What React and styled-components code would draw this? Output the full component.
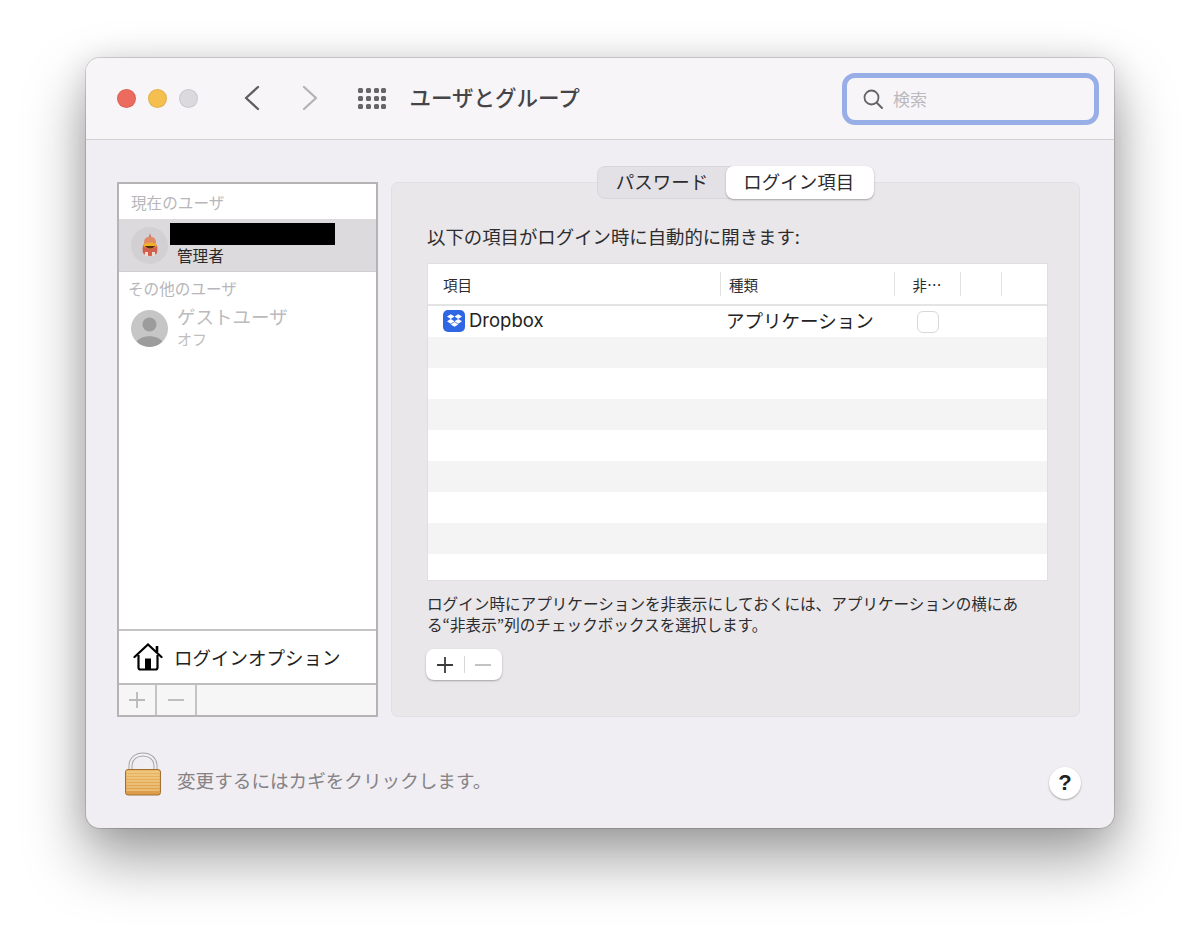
import React from 'react'
import styled, { createGlobalStyle } from 'styled-components'
import { FaDropbox } from 'react-icons/fa'

const JP = `"Noto Sans CJK JP", "Noto Sans", sans-serif`

const Global = createGlobalStyle`
    html, body {
        margin: 0;
        height: 942px;
        overflow: hidden;
        background: #fff;
        font-family: ${JP};
    }
`

const rows = Array.from({ length: 9 })

export default function App() {
    return (
        <Page>
            <Global />
            <Window>
                <TitleBar>
                    <Lights>
                        <Light $c="#ec6a5e" />
                        <Light $c="#f4bf4f" />
                        <Light $c="#dcd9de" />
                    </Lights>
                    <NavIcon viewBox="0 0 20 28" $ml={44}>
                        <path d="M16 3 L4 14 L16 25" stroke="#5f5d60" />
                    </NavIcon>
                    <NavIcon viewBox="0 0 20 28" $ml={38}>
                        <path d="M4 3 L16 14 L4 25" stroke="#b4b2b5" />
                    </NavIcon>
                    <DotGrid>
                        {Array.from({ length: 12 }).map((_, i) => (
                            <i key={i} />
                        ))}
                    </DotGrid>
                    <Title>ユーザとグループ</Title>
                    <SearchBox>
                        <svg width="22" height="22" viewBox="0 0 22 22" fill="none">
                            <circle cx="9.5" cy="9.5" r="7" stroke="#666467" strokeWidth="1.8" />
                            <path d="M14.8 14.8 L20 20" stroke="#666467" strokeWidth="2" strokeLinecap="round" />
                        </svg>
                        <SearchText>検索</SearchText>
                    </SearchBox>
                </TitleBar>

                <Body>
                    <Columns>
                        <Sidebar>
                            <UserList>
                                <GroupLabel $left={12}>現在のユーザ</GroupLabel>
                                <SelectedUser>
                                    <Avatar />
                                    <UserInfo>
                                        <Redacted />
                                        <Role>管理者</Role>
                                    </UserInfo>
                                </SelectedUser>
                                <GroupLabel $left={9} $top={6}>その他のユーザ</GroupLabel>
                                <GuestUser>
                                    <GuestAvatar />
                                    <div>
                                        <GuestName>ゲストユーザ</GuestName>
                                        <GuestState>オフ</GuestState>
                                    </div>
                                </GuestUser>
                            </UserList>
                            <LoginOptions>
                                <HouseIcon />
                                <span>ログインオプション</span>
                            </LoginOptions>
                            <BarRow>
                                <BarButton $w={36}>
                                    <PlusGlyph $c="#b9b9b9" />
                                </BarButton>
                                <BarButton $w={38}>
                                    <MinusGlyph $c="#b9b9b9" />
                                </BarButton>
                            </BarRow>
                        </Sidebar>

                        <Panel>
                            <Tabs>
                                <Tab>パスワード</Tab>
                                <Tab $active>ログイン項目</Tab>
                            </Tabs>
                            <PanelInner>
                                <Heading>以下の項目がログイン時に自動的に開きます:</Heading>
                                <Table>
                                    <HeadRow>
                                        <HeadCell $w={293} $pad={15}>項目</HeadCell>
                                        <HeadCell $w={175} $pad={8} $sep>種類</HeadCell>
                                        <HeadCell $w={66} $pad={17} $sep>非…</HeadCell>
                                        <HeadCell $w={41} $sep />
                                        <HeadCell $w={46} $sep />
                                    </HeadRow>
                                    {rows.map((_, i) => (
                                        <Row key={i} $odd={i % 2 === 1}>
                                            {i === 0 && (
                                                <>
                                                    <NameCell>
                                                        <DropIcon>
                                                            <FaDropbox size={15} color="#fff" />
                                                        </DropIcon>
                                                        <RowText $latin>Dropbox</RowText>
                                                    </NameCell>
                                                    <KindCell>
                                                        <RowText>アプリケーション</RowText>
                                                    </KindCell>
                                                    <Check />
                                                </>
                                            )}
                                        </Row>
                                    ))}
                                </Table>
                                <Note>
                                    ログイン時にアプリケーションを非表示にしておくには、アプリケーションの横にあ
                                    <br />
                                    る“非表示”列のチェックボックスを選択します。
                                </Note>
                                <AddRemove>
                                    <AddPart>
                                        <PlusGlyph $c="#3b3a3c" />
                                    </AddPart>
                                    <AddDivider />
                                    <AddPart>
                                        <MinusGlyph $c="#bdbbbe" />
                                    </AddPart>
                                </AddRemove>
                            </PanelInner>
                        </Panel>
                    </Columns>

                    <Footer>
                        <LockIcon />
                        <LockText>変更するにはカギをクリックします。</LockText>
                        <Help>?</Help>
                    </Footer>
                </Body>
            </Window>
        </Page>
    )
}

function PlusGlyph({ $c }) {
    return (
        <svg width="18" height="18" viewBox="0 0 18 18">
            <path d="M9 1 V17 M1 9 H17" stroke={$c} strokeWidth="1.8" />
        </svg>
    )
}

function MinusGlyph({ $c }) {
    return (
        <svg width="18" height="18" viewBox="0 0 18 18">
            <path d="M1 9 H17" stroke={$c} strokeWidth="1.8" />
        </svg>
    )
}

function Avatar() {
    return (
        <AvatarCircle>
            <svg width="16" height="24" viewBox="0 0 16 24">
                <path d="M8 0 L9 5 L7 5 Z" fill="#c9473a" />
                <path d="M1 20 C0 15 1 12 2 11 L14 11 C15 12 16 15 15 20 C12 24 4 24 1 20 Z" fill="#d2604e" />
                <ellipse cx="8" cy="9" rx="6" ry="5.5" fill="#e08a66" />
                <ellipse cx="8" cy="12.5" rx="6.5" ry="3" fill="#efb02c" />
                <path d="M2.5 13 Q8 18 13.5 13 Z" fill="#5c2b14" />
                <rect x="3" y="19" width="3" height="4" fill="#ecdccf" />
                <rect x="10" y="19" width="3" height="4" fill="#ecdccf" />
            </svg>
        </AvatarCircle>
    )
}

function GuestAvatar() {
    return (
        <GuestCircle>
            <svg width="37" height="37" viewBox="0 0 37 37">
                <circle cx="18.5" cy="14.5" r="7" fill="#9c9c9c" />
                <path d="M5 33 C8 24 29 24 32 33 C26 39 11 39 5 33 Z" fill="#9c9c9c" />
            </svg>
        </GuestCircle>
    )
}

function HouseIcon() {
    return (
        <svg width="30" height="28" viewBox="0 0 30 28" fill="none">
            <path d="M1.5 14 L15 1.5 L28.5 14" stroke="#000" strokeWidth="2.2" strokeLinecap="round" />
            <path d="M24 3 V9" stroke="#000" strokeWidth="2.6" />
            <path d="M5.5 12 V24.5 Q5.5 26.5 7.5 26.5 H22.5 Q24.5 26.5 24.5 24.5 V12" stroke="#000" strokeWidth="2.2" />
            <rect x="12" y="15.5" width="6" height="11" fill="#000" />
        </svg>
    )
}

function LockIcon() {
    const bars = [20, 23, 26, 29, 32, 35, 38]
    return (
        <svg width="36" height="44" viewBox="0 0 36 44" fill="none">
            <defs>
                <linearGradient id="lockBody" x1="0" y1="0" x2="0" y2="1">
                    <stop offset="0" stopColor="#e9b765" />
                    <stop offset="1" stopColor="#dc9a46" />
                </linearGradient>
            </defs>
            <path d="M5.5 19 V14 C5.5 -1.5 30.5 -1.5 30.5 14 V19" stroke="#a3a3a5" strokeWidth="4" />
            <path d="M5.5 19 V14 C5.5 -1.5 30.5 -1.5 30.5 14 V19" stroke="#f2f2f3" strokeWidth="2" />
            <rect x="0.5" y="17.5" width="35" height="25.5" rx="2.5" fill="url(#lockBody)" stroke="#a26f34" />
            {bars.map((y) => (
                <path key={y} d={`M1.5 ${y} H34.5`} stroke="#f6d798" strokeWidth="1.2" />
            ))}
        </svg>
    )
}

const Page = styled.div`
    width: 1200px;
    height: 942px;
    padding: 58px 0 0 86px;
    box-sizing: border-box;
    overflow: hidden;
`

const Window = styled.div`
    width: 1028px;
    height: 770px;
    border-radius: 14px;
    background: #f0eef2;
    overflow: hidden;
    box-shadow: 0 0 0 1px rgba(0, 0, 0, 0.14), 0 30px 60px 2px rgba(0, 0, 0, 0.36),
        0 2px 30px rgba(0, 0, 0, 0.12);
`

const TitleBar = styled.div`
    height: 81px;
    display: flex;
    align-items: center;
    padding: 0 15px 0 31px;
    background: #f8f5f9;
    border-bottom: 1px solid #d2d0d3;
`

const Lights = styled.div`
    display: flex;
    gap: 12px;
`

const Light = styled.span`
    width: 19px;
    height: 19px;
    border-radius: 50%;
    background: ${(p) => p.$c};
    box-shadow: inset 0 0 0 1px rgba(0, 0, 0, 0.08);
`

const NavIcon = styled.svg`
    width: 20px;
    height: 28px;
    margin-left: ${(p) => p.$ml}px;
    margin-bottom: 2px;
    fill: none;
    stroke-width: 2.3;
    stroke-linecap: round;
    stroke-linejoin: round;
`

const DotGrid = styled.div`
    margin-left: 38px;
    display: grid;
    grid-template-columns: repeat(4, 5px);
    grid-auto-rows: 5px;
    gap: 3px 2.8px;
    i {
        background: #676568;
        border-radius: 1.5px;
    }
`

const Title = styled.h1`
    margin: 0 0 5px 23px;
    font-size: 21.5px;
    font-weight: 500;
    color: #454446;
    white-space: nowrap;
`

const SearchBox = styled.div`
    margin-left: auto;
    box-sizing: border-box;
    width: 257px;
    height: 52px;
    border: 5px solid #98aee6;
    border-radius: 13px;
    display: flex;
    align-items: center;
    padding-left: 15px;
    gap: 9px;
`

const SearchText = styled.span`
    font-size: 17px;
    color: #bbb9bc;
`

const Body = styled.div`
    padding: 42px 34px 0 31px;
`

const Columns = styled.div`
    display: flex;
    gap: 13px;
    height: 535px;
`

const Sidebar = styled.div`
    box-sizing: border-box;
    width: 261px;
    display: flex;
    flex-direction: column;
    background: #fff;
    border: 2px solid #b4b4b5;
`

const UserList = styled.div`
    flex: 1;
    padding-top: 8px;
`

const GroupLabel = styled.div`
    font-size: 15.6px;
    line-height: 20px;
    margin: ${(p) => p.$top || 0}px 0 0 ${(p) => p.$left}px;
    color: #b8b6b9;
`

const SelectedUser = styled.div`
    height: 53px;
    margin-top: 7px;
    background: #dcdadc;
    border-bottom: 1px solid #d0ced0;
    box-sizing: border-box;
    display: flex;
    align-items: center;
    padding-left: 12px;
    gap: 2px;
`

const AvatarCircle = styled.div`
    width: 37px;
    height: 37px;
    border-radius: 50%;
    background: #d2d0d2;
    display: flex;
    align-items: center;
    justify-content: center;
`

const UserInfo = styled.div`
    display: flex;
    flex-direction: column;
    align-self: flex-start;
    padding-top: 4px;
`

const Redacted = styled.div`
    width: 165px;
    height: 22px;
    background: #000;
`

const Role = styled.div`
    font-size: 15.6px;
    line-height: 21px;
    margin-left: 7px;
    color: #2a2a2a;
`

const GuestUser = styled.div`
    display: flex;
    gap: 9px;
    padding: 5px 0 0 12px;
    align-items: flex-start;
`

const GuestCircle = styled.div`
    width: 37px;
    height: 37px;
    margin-top: 7px;
    border-radius: 50%;
    background: #c6c6c6;
    overflow: hidden;
`

const GuestName = styled.div`
    font-size: 18.5px;
    line-height: 26px;
    color: #bcbabd;
`

const GuestState = styled.div`
    font-size: 15px;
    line-height: 20px;
    color: #c0bec1;
`

const LoginOptions = styled.div`
    height: 54px;
    box-sizing: border-box;
    border-top: 2px solid #c4c4c5;
    display: flex;
    align-items: center;
    gap: 11px;
    padding-left: 14px;
    font-size: 18.5px;
    color: #222;
`

const BarRow = styled.div`
    height: 30px;
    display: flex;
    background: #f6f6f6;
    border-top: 2px solid #bdbdbe;
`

const BarButton = styled.div`
    width: ${(p) => p.$w}px;
    border-right: 2px solid #c4c4c5;
    display: flex;
    align-items: center;
    justify-content: center;
`

const Panel = styled.div`
    width: 689px;
    box-sizing: border-box;
    background: #e9e7ea;
    border: 1px solid #e1dfe3;
    border-radius: 7px;
    display: flex;
    flex-direction: column;
`

const Tabs = styled.div`
    align-self: center;
    margin-top: -17px;
    height: 33px;
    box-sizing: border-box;
    display: flex;
    align-items: center;
    background: #e3e1e5;
    border: 1px solid #d8d6d9;
    border-radius: 8px;
`

const Tab = styled.div`
    height: 33px;
    box-sizing: border-box;
    display: flex;
    align-items: center;
    font-size: 18.5px;
    color: #2c2c2e;
    padding: ${(p) => (p.$active ? '0 20px 3px 17px' : '0 18px 3px 18px')};
    ${(p) =>
        p.$active &&
        `
        background: #fff;
        border-radius: 8px;
        margin: 0 -1px 0 0;
        box-shadow: 0 1px 2px rgba(0,0,0,.3);
    `}
`

const PanelInner = styled.div`
    padding: 25px 31px 0 35px;
    display: flex;
    flex-direction: column;
    align-items: flex-start;
`

const Heading = styled.div`
    font-size: 18.4px;
    line-height: 24px;
    color: #2c2c2e;
    white-space: nowrap;
`

const Table = styled.div`
    width: 621px;
    height: 318px;
    margin-top: 15px;
    background: #fff;
    overflow: hidden;
    border: 1px solid #e0dee1;
    box-sizing: border-box;
`

const HeadRow = styled.div`
    height: 42px;
    box-sizing: border-box;
    display: flex;
    align-items: center;
    border-bottom: 2px solid #e4e4e5;
`

const HeadCell = styled.div`
    width: ${(p) => p.$w}px;
    height: 24px;
    box-sizing: border-box;
    display: flex;
    align-items: center;
    font-size: 14.5px;
    color: #2c2c2e;
    padding-left: ${(p) => p.$pad || 0}px;
    border-left: ${(p) => (p.$sep ? '1.5px solid #e2e2e3' : 'none')};
`

const Row = styled.div`
    height: 31px;
    display: flex;
    align-items: center;
    background: ${(p) => (p.$odd ? '#f4f4f5' : '#fff')};
`

const NameCell = styled.div`
    width: 298px;
    box-sizing: border-box;
    display: flex;
    align-items: center;
    gap: 4px;
    padding-left: 15px;
`

const RowText = styled.span`
    display: block;
    margin-bottom: 3px;
    font-family: ${(p) => (p.$latin ? '"Inter", "Liberation Sans", sans-serif' : JP)};
    font-size: 18.5px;
    line-height: 24px;
    color: #222;
    white-space: nowrap;
`

const DropIcon = styled.span`
    width: 22px;
    height: 22px;
    margin-bottom: 2px;
    border-radius: 5px;
    background: #2f66e4;
    display: flex;
    align-items: center;
    justify-content: center;
`

const KindCell = styled.div`
    width: 191px;
`

const Check = styled.span`
    width: 22px;
    height: 22px;
    box-sizing: border-box;
    border: 1.5px solid #d8d8d9;
    border-radius: 6px;
    background: #fff;
`

const Note = styled.div`
    margin-top: 12px;
    font-size: 15.6px;
    line-height: 21px;
    color: #2c2c2e;
    white-space: nowrap;
`

const AddRemove = styled.div`
    margin-top: 14px;
    margin-left: -1px;
    width: 76px;
    height: 31px;
    display: flex;
    align-items: center;
    background: #fff;
    border-radius: 8px;
    box-shadow: 0 1px 2px rgba(0, 0, 0, 0.3);
`

const AddPart = styled.div`
    flex: 1;
    display: flex;
    justify-content: center;
`

const AddDivider = styled.span`
    width: 1px;
    height: 17px;
    background: #d6d5d7;
`

const Footer = styled.div`
    display: flex;
    align-items: flex-start;
    margin-top: 35px;
    padding-left: 8px;
`

const LockText = styled.span`
    margin: 16px 0 0 16px;
    font-size: 18.6px;
    line-height: 24px;
    color: #858386;
    white-space: nowrap;
`

const Help = styled.div`
    margin: 15px -1px 0 auto;
    width: 32px;
    height: 32px;
    border-radius: 50%;
    background: #fff;
    box-shadow: 0 1px 2px rgba(0, 0, 0, 0.32);
    display: flex;
    align-items: center;
    justify-content: center;
    font-family: "Liberation Sans", sans-serif;
    font-weight: 700;
    font-size: 22px;
    color: #222;
`
